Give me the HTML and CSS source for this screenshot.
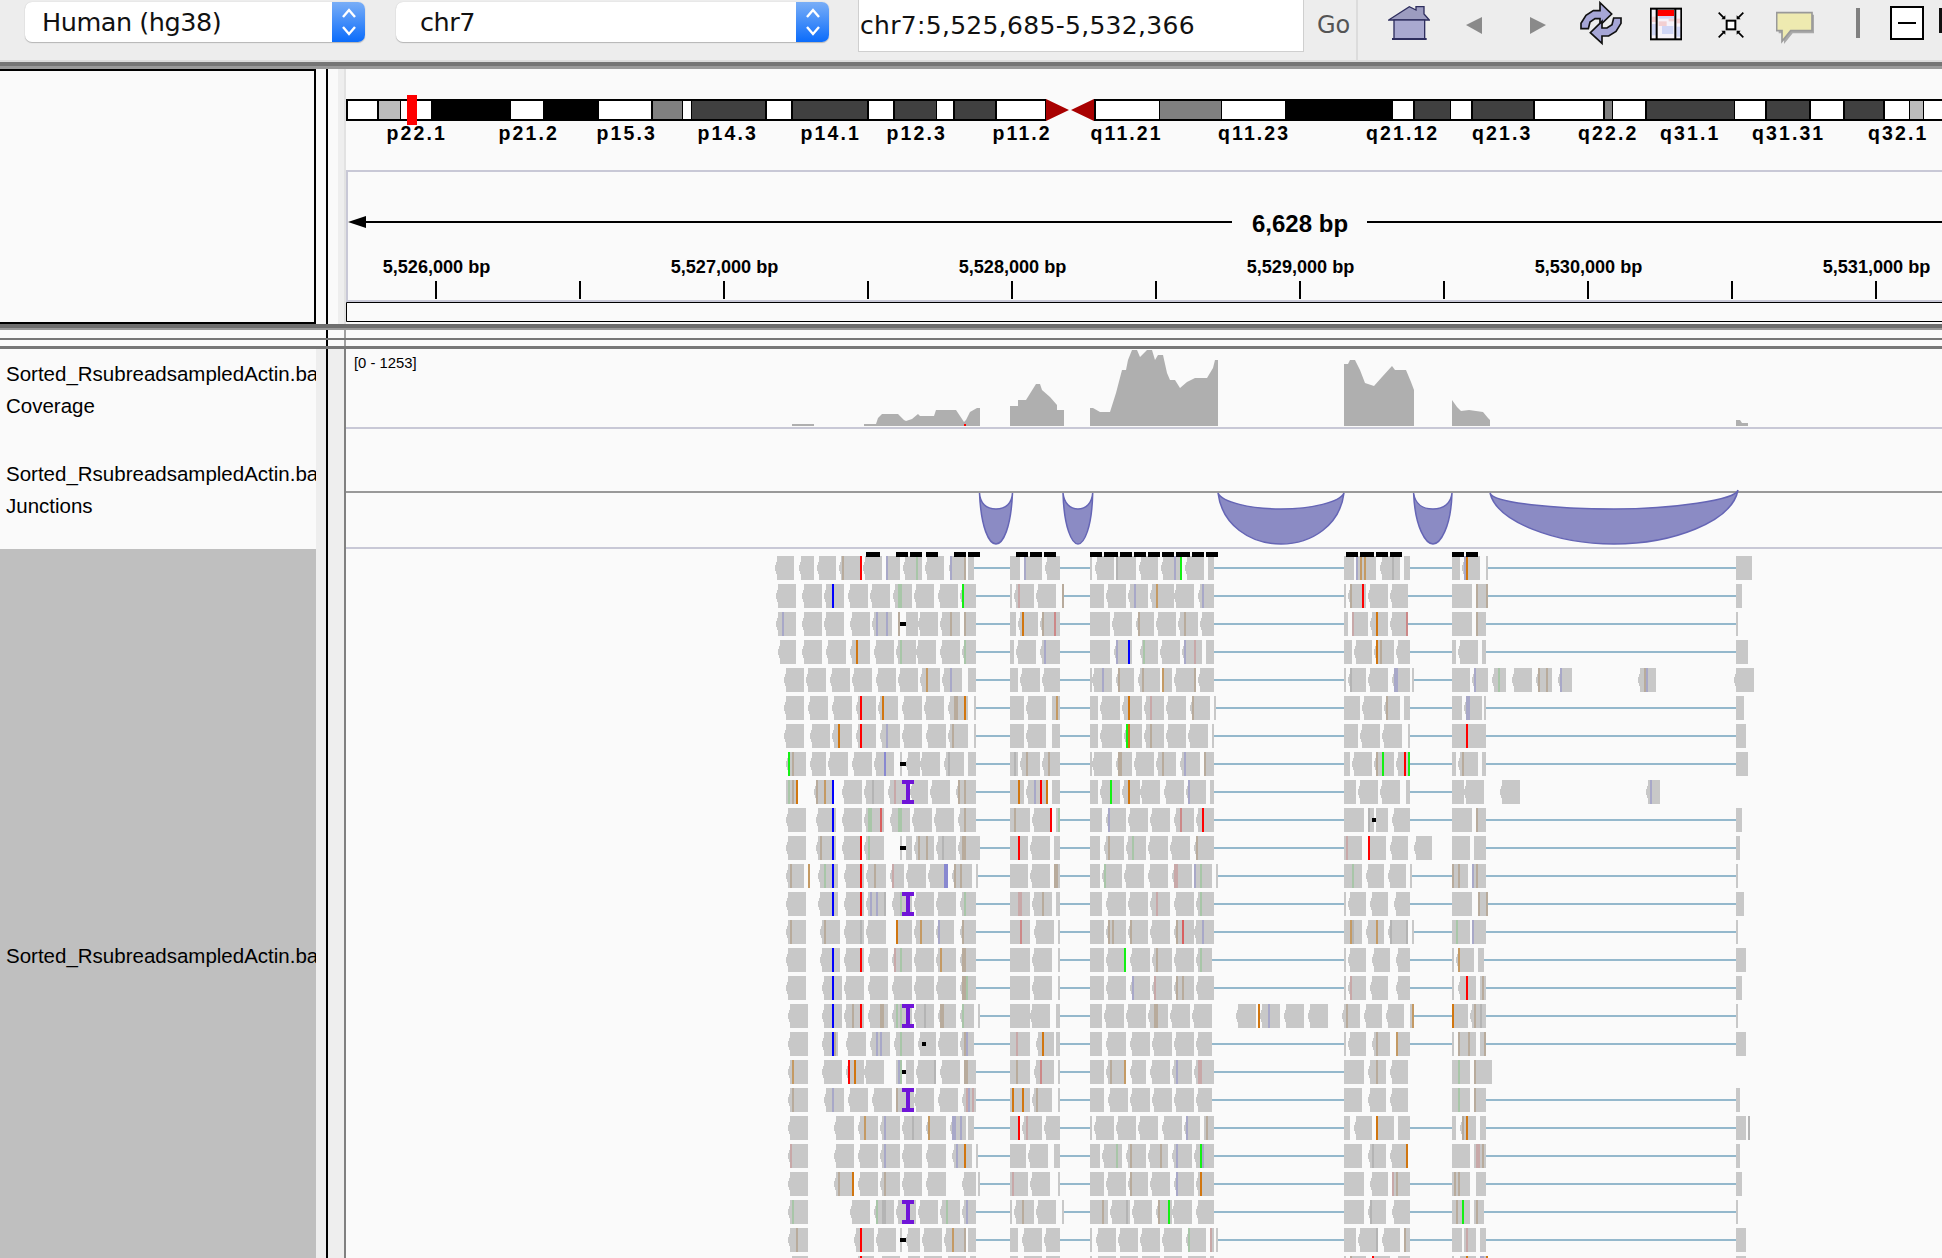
FILE: index.html
```html
<!DOCTYPE html>
<html lang="en">
<head>
<meta charset="utf-8">
<title>IGV</title>
<link rel="stylesheet" href="styles.css">
</head>
<body>
<div class="app">
  <header class="toolbar">
    <div class="combo combo-genome"><span class="combo-text">Human (hg38)</span>
      <span class="stepper"><svg class="chev" viewBox="0 0 16 30"><path d="M2 10 L8 3 L14 10 M2 20 L8 27 L14 20"/></svg></span></div>
    <div class="combo combo-chr"><span class="combo-text">chr7</span>
      <span class="stepper"><svg class="chev" viewBox="0 0 16 30"><path d="M2 10 L8 3 L14 10 M2 20 L8 27 L14 20"/></svg></span></div>
    <div class="locus">chr7:5,525,685-5,532,366</div>
    <div class="go">Go</div>
    <svg class="icon ic-home" viewBox="24 0 126 180"><path class="home-roof" d="M26 60 L88 20 L108 30 L108 20 L132 20 L132 42 L148 60 Z"/><rect class="home-body" x="42" y="60" width="92" height="56"/><path class="home-base" d="M36 117 H140"/></svg>
    <svg class="icon ic-left" viewBox="0 0 16 60"><path class="nav" d="M0 25 L16 17 V34 Z"/></svg>
    <svg class="icon ic-right" viewBox="0 0 16 60"><path class="nav" d="M16 25 L0 17 V34 Z"/></svg>
    <svg class="icon ic-refresh" viewBox="600 0 126 180"><path class="refresh" d="M603 86 V70 L618 46 L640 32 H660 V8 L695 42 L660 76 V56 H645 L630 66 L625 86 Z"/><path class="refresh" d="M723 54 V70 L708 94 L686 108 H666 V130 L631 98 L666 64 V84 H681 L696 74 L701 54 Z"/></svg>
    <svg class="icon ic-region" viewBox="810 0 96 180">
      <rect class="rg-bg" x="812" y="26" width="92" height="92"/>
      <rect class="rg-pink" x="816" y="50" width="12" height="16"/><rect class="rg-blue" x="816" y="72" width="12" height="34"/>
      <rect class="rg-pink" x="836" y="64" width="24" height="14"/><rect class="rg-blue" x="846" y="78" width="34" height="24"/><rect class="rg-blue" x="836" y="48" width="46" height="8"/><rect class="rg-pink" x="866" y="56" width="16" height="8"/><rect class="rg-blue" x="890" y="80" width="12" height="30"/><rect class="rg-pink" x="890" y="56" width="12" height="14"/>
      <rect class="rg-red" x="832" y="30" width="50" height="18"/>
      <path class="rg-line" d="M830 26 V118 M886 26 V118"/>
      <rect class="rg-frame" x="812" y="26" width="92" height="92"/>
    </svg>
    <svg class="icon ic-collapse" viewBox="1014 0 78 180">
      <rect class="cl-box" x="1040" y="62" width="26" height="26"/>
      <path class="cl-arrow" d="M1016 38 L1034 56 M1090 38 L1072 56 M1016 112 L1034 94 M1090 112 L1072 94"/>
      <path class="cl-head" d="M1036 58 H1024 L1036 46 Z M1070 58 H1082 L1070 46 Z M1036 92 H1024 L1036 104 Z M1070 92 H1082 L1070 104 Z"/>
    </svg>
    <svg class="icon ic-bubble" viewBox="1188 0 114 180"><path class="bb-shadow" d="M1196 44 H1302 V100 H1238 L1212 132 V100 H1196 Z"/><path class="bb-fill" d="M1190 38 H1296 V92 H1232 L1206 124 V92 H1190 Z"/></svg>
    <svg class="icon ic-sep" viewBox="0 0 4 60"><rect class="sep" x="0" y="8" width="4" height="30"/></svg>
    <svg class="icon ic-box" viewBox="0 0 34 60"><rect class="bx" x="1" y="7" width="32" height="32"/><path class="bx-line" d="M8 23 H26"/></svg>
    <svg class="icon ic-box2" viewBox="0 0 3 60"><rect class="sep-k" x="0" y="8" width="3" height="25"/></svg>
  </header>
  <div class="band-top"></div>

  <section class="cols head-row">
    <div class="name-box"></div>
    <div class="gut-a"></div><div class="divider"></div><div class="gut-b"></div>
    <svg class="head-svg" viewBox="344 69 1598 255">
      <rect class="strip" x="344" y="69" width="2" height="255"/>
      <rect class="k" x="346" y="99" width="700" height="22"/>
      <rect class="k" x="1094" y="99" width="848" height="22"/>
      <g class="w">
        <rect x="348" y="101" width="29" height="18"/><rect x="401" y="101" width="30" height="18"/><rect x="511" y="101" width="32" height="18"/><rect x="599" y="101" width="52" height="18"/><rect x="683" y="101" width="8" height="18"/><rect x="767" y="101" width="24" height="18"/><rect x="869" y="101" width="24" height="18"/><rect x="937" y="101" width="16" height="18"/><rect x="997" y="101" width="48" height="18"/><rect x="1096" y="101" width="63" height="18"/><rect x="1222" y="101" width="63" height="18"/><rect x="1393" y="101" width="20" height="18"/><rect x="1451" y="101" width="20" height="18"/><rect x="1535" y="101" width="68" height="18"/><rect x="1613" y="101" width="32" height="18"/><rect x="1735" y="101" width="30" height="18"/><rect x="1811" y="101" width="32" height="18"/><rect x="1885" y="101" width="24" height="18"/><rect x="1924" y="101" width="18" height="18"/>
      </g>
      <g class="g-lt"><rect x="379" y="101" width="21" height="18"/><rect x="1910" y="101" width="13" height="18"/></g>
      <g class="g-md"><rect x="653" y="101" width="29" height="18"/><rect x="1160" y="101" width="61" height="18"/><rect x="1605" y="101" width="7" height="18"/></g>
      <g class="g-dk"><rect x="692" y="101" width="73" height="18"/><rect x="793" y="101" width="74" height="18"/><rect x="895" y="101" width="41" height="18"/><rect x="955" y="101" width="40" height="18"/><rect x="1415" y="101" width="35" height="18"/><rect x="1473" y="101" width="60" height="18"/><rect x="1647" y="101" width="87" height="18"/><rect x="1767" y="101" width="42" height="18"/><rect x="1845" y="101" width="38" height="18"/></g>
      <path class="centro" d="M1046 99 L1069 110 L1046 121 Z M1094 99 L1071 110 L1094 121 Z"/>
      <rect class="marker" x="407" y="95" width="10" height="30"/>
      <g class="cyto-label">
        <text x="386.5" y="139.5">p22.1</text><text x="498.5" y="139.5">p21.2</text><text x="596.5" y="139.5">p15.3</text><text x="697.5" y="139.5">p14.3</text><text x="800.5" y="139.5">p14.1</text><text x="886.5" y="139.5">p12.3</text><text x="992.5" y="139.5">p11.2</text><text x="1090.5" y="139.5">q11.21</text><text x="1218" y="139.5">q11.23</text><text x="1366" y="139.5">q21.12</text><text x="1472" y="139.5">q21.3</text><text x="1578" y="139.5">q22.2</text><text x="1660" y="139.5">q31.1</text><text x="1752" y="139.5">q31.31</text><text x="1868" y="139.5">q32.1</text>
      </g>
      <path class="rule-frame" d="M1942 171 H347 V301 H1942"/>
      <path class="rule-black" d="M1942 302.5 H346.5 V321.5 H1942"/>
      <path class="span-line" d="M366 222 H1232 M1367 222 H1942"/>
      <path class="k" d="M348 222 L366 216 V228 Z"/>
      <text class="span-text" x="1252" y="232">6,628 bp</text>
      <path class="ticks" d="M436 281 V299 M580 281 V299 M724 281 V299 M868 281 V299 M1012 281 V299 M1156 281 V299 M1300 281 V299 M1444 281 V299 M1588 281 V299 M1732 281 V299 M1876 281 V299"/>
      <g class="tick-label">
        <text x="436.5" y="273">5,526,000 bp</text><text x="724.5" y="273">5,527,000 bp</text><text x="1012.5" y="273">5,528,000 bp</text><text x="1300.5" y="273">5,529,000 bp</text><text x="1588.5" y="273">5,530,000 bp</text><text x="1876.5" y="273">5,531,000 bp</text>
      </g>
    </svg>
  </section>

  <div class="band-a"></div>
  <div class="cols gap-row gap-8"><div></div><div></div><div class="divider"></div><div></div><div class="strip-cell"></div></div>
  <div class="band-b"></div>
  <div class="cols gap-row gap-6"><div></div><div></div><div class="divider"></div><div></div><div class="strip-cell"></div></div>
  <div class="band-c"></div>

  <section class="cols track-row track-cov">
    <div class="name cov-name"><div class="line">Sorted_RsubreadsampledActin.bam</div><div class="line">Coverage</div></div>
    <div class="gut"></div><div class="divider"></div><div class="gut"></div>
    <svg class="track-svg" viewBox="344 349 1598 80">
      <rect class="strip-g" x="344" y="349" width="2" height="80"/>
      <text class="range" x="354" y="368">[0 - 1253]</text>
      <g class="cov">
        <path d="M792 426 V424 H814 V426 Z"/>
        <path d="M864 426 V424 H876 L878 418 L882 414 H898 L904 420 L906 421 L912 419 L918 414 L920 416 H934 L936 410 H956 L964 422 L966 420 L970 412 L977 408 H980 V426 Z"/>
        <path d="M1010 426 V406 H1018 V400 H1026 L1036 384 H1040 L1042 390 L1050 397 L1057 405 V410 H1064 V426 Z"/>
        <path d="M1090 426 V408 H1093 L1100 412 H1110 L1116 393 L1122 370 H1126 L1128 360 L1132 350 H1137 L1140 357 L1147 350 H1152 L1155 360 L1158 355 H1163 L1167 373 L1170 380 H1175 L1180 388 L1187 382 L1195 378 H1207 L1213 368 L1215 360 H1218 V426 Z"/>
        <path d="M1344 426 V364 H1348 L1350 360 H1355 L1360 370 L1365 383 L1374 386 L1382 377 L1392 366 L1395 370 H1406 L1411 382 L1414 390 V426 Z"/>
        <path d="M1452 426 V400 L1457 407 L1461 411 L1469 410 L1483 412 L1488 418 L1490 420 V426 Z"/>
        <path d="M1736 426 V420 H1740 L1742 423 H1748 V426 Z"/>
      </g>
      <rect class="cov-red" x="964" y="424" width="2" height="2"/>
      <rect class="sep-lt" x="346" y="427" width="1596" height="2"/>
    </svg>
  </section>

  <section class="cols track-row track-junc">
    <div class="name junc-name"><div class="line">Sorted_RsubreadsampledActin.bam</div><div class="line">Junctions</div></div>
    <div class="gut"></div><div class="divider"></div><div class="gut"></div>
    <svg class="track-svg" viewBox="344 429 1598 120">
      <rect class="strip-g" x="344" y="429" width="2" height="120"/>
      <rect class="sep-md" x="346" y="491" width="1596" height="2"/>
      <g class="arc">
        <path d="M979.5 493 C981 528 989 544 996 544 C1003 544 1011 528 1012.5 493 C1012 503 1006 509 996 509 C986 509 980 503 979.5 493 Z"/>
        <path d="M1063 493 C1064 528 1072 544 1078 544 C1084 544 1092 528 1092.7 493 C1092 503 1086 509 1078 509 C1070 509 1064 503 1063 493 Z"/>
        <path d="M1218 493 C1222 525 1250 544 1281 544 C1312 544 1340 525 1344 493 C1340 502 1312 509 1281 509 C1250 509 1222 502 1218 493 Z"/>
        <path d="M1413.6 493 C1415 528 1426 544 1433 544 C1440 544 1451 528 1452 493 C1451 503 1444 509 1433 509 C1422 509 1415 503 1413.6 493 Z"/>
        <path d="M1490 493 C1497 522 1556 544 1614 544 C1672 544 1732 522 1738 490 C1736 500 1672 509 1614 509 C1556 509 1493 503 1490 493 Z"/>
      </g>
      <rect class="sep-lt" x="346" y="547" width="1596" height="2"/>
    </svg>
  </section>

  <section class="cols track-row track-reads">
    <div class="name reads-name"><div class="line">Sorted_RsubreadsampledActin.bam</div></div>
    <div class="gut"></div><div class="divider"></div><div class="gut"></div>
    <svg id="reads" class="track-svg" viewBox="344 549 1598 709"><rect class="strip-g" x="344" y="549" width="2" height="709"/></svg>
  </section>
</div>
<script src="reads.js"></script>
</body>
</html>
```
FILE: styles.css
```css
* { box-sizing: border-box; }
html, body { margin: 0; padding: 0; background: #fafafa; }
.app { width: 1942px; height: 1258px; overflow: hidden; display: flex; flex-direction: column; font-family: "Liberation Sans", Arial, sans-serif; }

.toolbar { flex: none; height: 62px; background: #ededed; border-bottom: 2px solid #dcdcdc; display: flex; align-items: flex-start; }
.combo { flex: none; height: 40px; margin-top: 2px; background: #fff; border-radius: 7px; box-shadow: 0 1px 1px #b5b5b5, 0 0 1px #c4c4c4; display: flex; justify-content: space-between; align-items: center; overflow: hidden; font-family: "DejaVu Sans", sans-serif; font-size: 25.5px; letter-spacing: -0.45px; color: #111; }
.combo-genome { margin-left: 25px; width: 340px; }
.combo-chr { margin-left: 31px; width: 433px; }
.combo-text { padding-left: 17px; line-height: 42px; }
.combo-chr .combo-text { padding-left: 24px; }
.stepper { width: 33px; height: 40px; background: linear-gradient(#79aef7, #0b6cfb); display: flex; align-items: center; justify-content: center; }
.chev { width: 16px; height: 30px; fill: none; stroke: #fff; stroke-width: 2.4; }
.locus { flex: none; width: 446px; height: 52px; margin-left: 29px; padding-left: 1px; background: #fff; border: 1px solid #cfcfcf; border-top: 0; font-family: "DejaVu Sans", sans-serif; font-size: 25px; letter-spacing: 0.3px; line-height: 51px; color: #111; }
.go { flex: none; width: 54px; height: 60px; padding-left: 13px; border-right: 2px solid #dcdcdc; font-family: "DejaVu Sans", sans-serif; font-size: 24px; line-height: 50px; color: #555; }

.icon { flex: none; height: 60px; }
.ic-home { width: 42px; margin-left: 30px; }
.ic-left { width: 16px; margin-left: 36px; }
.ic-right { width: 16px; margin-left: 48px; }
.ic-refresh { width: 42px; margin-left: 34px; }
.ic-region { width: 32px; margin-left: 28px; }
.ic-collapse { width: 26px; margin-left: 36px; }
.ic-bubble { width: 38px; margin-left: 32px; }
.ic-sep { width: 4px; margin-left: 42px; }
.ic-box { width: 34px; margin-left: 30px; }
.ic-box2 { width: 3px; margin-left: 15px; }
.home-roof { fill: #9c9cc0; stroke: #2e2e5e; stroke-width: 4; }
.home-body { fill: #a9a9d0; stroke: #2e2e5e; stroke-width: 4; }
.home-base { stroke: #2e2e5e; stroke-width: 6; fill: none; }
.nav { fill: #8a8a8a; }
.refresh { fill: #a6a6d6; stroke: #111; stroke-width: 5; }
.rg-bg { fill: #f6f2fa; }
.rg-pink { fill: #f3cfd2; }
.rg-blue { fill: #d0d6f6; }
.rg-red { fill: #ff0000; }
.rg-line { stroke: #000; stroke-width: 6; fill: none; }
.rg-frame { fill: none; stroke: #000; stroke-width: 6; }
.cl-box { fill: #fff; stroke: #000; stroke-width: 6; }
.cl-arrow { stroke: #000; stroke-width: 5; fill: none; }
.cl-head { fill: #000; }
.bb-shadow { fill: #aaa; }
.bb-fill { fill: #eeeab0; stroke: #999; stroke-width: 5; }
.sep { fill: #808080; }
.sep-k { fill: #111; }
.bx { fill: #fff; stroke: #000; stroke-width: 2; }
.bx-line { stroke: #000; stroke-width: 2; fill: none; }

.band-top { flex: none; height: 7px; background: linear-gradient(#757575 0 4px, #9a9a9a 4px 7px); }
.cols { flex: none; display: grid; grid-template-columns: 316px 10px 2px 16px 1598px; }
.head-row { height: 255px; }
.name-box { border: 2px solid #000; border-left: 0; background: #fafafa; }
.gut-a { background: #fafafa; }
.gut-b { background: linear-gradient(90deg, #fafafa 0 10px, #eeeeee 10px 16px); }
.divider { background: #000; }
.head-svg, .track-svg { display: block; width: 1598px; height: 100%; background: #fafafa; }
.strip { fill: #e2e2e2; }
.k { fill: #000; }
.w { fill: #fff; }
.g-lt { fill: #bbbbbb; }
.g-md { fill: #808080; }
.g-dk { fill: #404040; }
.centro { fill: #a80000; }
.marker { fill: #ff0000; }
.cyto-label { font-size: 19.5px; font-weight: 700; letter-spacing: 2.1px; fill: #000; }
.rule-frame { fill: none; stroke: #c8c8d6; stroke-width: 2; }
.rule-black { fill: none; stroke: #000; stroke-width: 1; }
.span-line { fill: none; stroke: #000; stroke-width: 2; }
.span-text { font-size: 24px; font-weight: 700; fill: #000; }
.ticks { fill: none; stroke: #000; stroke-width: 2; }
.tick-label { font-size: 18.1px; font-weight: 700; fill: #000; text-anchor: middle; }

.band-a { flex: none; height: 6px; background: linear-gradient(#6e6e6e 0 4px, #999 4px 6px); }
.band-b { flex: none; height: 2px; background: #777; }
.band-c { flex: none; height: 3px; background: #777; }
.gap-8 { height: 8px; }
.gap-6 { height: 6px; }
.gap-row { background: #fafafa; }
.strip-cell { border-left: 2px solid #a0a0a0; }

.track-cov { height: 80px; }
.track-junc { height: 120px; }
.track-reads { height: 709px; }
.name { background: #fafafa; overflow: hidden; font-size: 20.5px; line-height: 32px; color: #000; white-space: nowrap; padding-left: 6px; }
.cov-name { padding-top: 9px; }
.junc-name { padding-top: 29px; }
.reads-name { padding-top: 391px; background: #bfbfbf; }
.line { height: 32px; }
.gut { background: #eeeeee; }
.strip-g { fill: #808080; }
.range { font-size: 14.8px; fill: #000; }
.cov { fill: #afafaf; }
.cov-red { fill: #ff0000; }
.sep-lt { fill: #c8c8d6; }
.sep-md { fill: #999; }
.arc { fill: #8b8bc4; stroke: #6565b5; stroke-width: 1.5; }

.read { fill: #c8c8c8; }
.intron { fill: #94b8cc; }
.tag { fill: #000; }
.ins { fill: #7015d8; }
```
FILE: reads.js
```js
(function () {
  var NS = "http://www.w3.org/2000/svg";
  var svg = document.getElementById("reads");
  var COLORS = { r: "#ff0000", R: "#d86060", b: "#0000ff", g: "#14f014", o: "#d17610", a: "#c49a64", t: "#b8ab9c", p: "#a8a8c8", P: "#8888d0", k: "#c8a8a8", K: "#cc8888", e: "#a8c6a8", y: "#b4b4b4", D: "#000000" };
  var FLAT = [1010, 1090, 1344, 1452, 1736];
  var BOUND = [1000, 1075, 1280, 1430, 1600];

  var left = [
    "45-102 117-162 171-228 237-306 t246 r300 309-366 378-420 p378 429-486 e468 495-552 567-618 p570 t612 624-642 750-780 792-846 p792 855-900 990-996 1005-1062 1068-1128 y1068 1137-1194 1203-1266 p1242 g1260 1275-1332 1344-1362",
    "48-108 126-186 192-252 b216 264-324 330-390 399-456 e414-426 462-522 534-594 600-648 g606 750-756 762-822 k774 828-888 906-912 t906 990-1032 1038-1098 1104-1164 p1122 1170-1242 a1188 1242-1302 1314-1362 p1326",
    "48-108 p66 126-186 192-252 270-330 336-396 p348 p378 414-420 t414 438-474 474-534 540-600 t570 612-648 t612 D420-438 750-768 774-834 o786 840-900 t846 K882 990-1050 1056-1116 1128-1182 t1134 1188-1248 1254-1314 t1272 1320-1362",
    "54-108 126-186 198-258 270-330 o288 342-402 408-468 e420 468-528 540-600 606-648 e612 750-762 768-828 840-900 p852 990-1050 1062-1116 p1068 b1104 1140-1194 e1150 1200-1260 1266-1326 p1272 k1302 1338-1362",
    "42-102 108-168 180-240 246-306 318-378 384-444 450-510 a468 516-576 p540 594-618 720-744 750-810 816-870 960-966 966-1026 p996 1038-1092 t1044 1104-1170 t1116 1176-1206 a1176 1212-1278 t1272 1284-1332",
    "42-102 114-174 186-246 258-318 r270 324-384 o336 396-456 462-522 534-594 t552-564 o582 612-618 720-762 768-828 846-870 a858 960-984 990-1050 1056-1116 o1074 1122-1182 k1140 1188-1248 1260-1320 t1266 1332-1338",
    "42-102 120-180 186-246 o204 258-318 r270 330-390 p348 396-456 468-528 534-594 t546 612-618 720-762 768-828 846-870 960-984 990-1056 1062-1116 g1068 o1074 1122-1182 t1140 1188-1248 1254-1314 1326-1332",
    "48-108 g54 t66 120-168 174-234 246-306 312-372 P342 390-396 408-450 450-510 522-582 y534 594-618 D390-408 720-744 y732 750-810 t768 816-870 t834 960-966 966-1026 1038-1086 t1044-1056 1092-1152 1158-1218 t1176 1230-1290 p1242 1302-1332 t1302",
    "48-84 e54 t66 o78 132-192 t138 a162 b186 216-276 282-342 y306 354-414 k372 420-474 480-540 558-618 t564 t582 I396 720-762 o744 768-828 p792 r810 828-834 o828 846-870 960-984 990-1050 g1020 1056-1110 o1074 1110-1170 1182-1242 1248-1308 p1254 1320-1332",
    "48-108 138-198 b186 216-276 282-342 e294-306 R330 360-420 e384-396 426-486 492-552 564-618 t582 720-780 t732 786-846 r840 858-870 e864 960-996 1008-1068 p1014 1074-1134 1140-1200 1212-1272 K1230 1278-1332 r1296",
    "48-108 138-198 t150 b186 216-276 r270 282-342 e294 390-396 408-426 432-492 t444 t468 498-558 y516 564-624 t576-588 624-630 D390-408 720-774 r744 780-840 852-870 960-990 1002-1062 t1014 1068-1128 e1086 1134-1194 1200-1260 1272-1332 t1278",
    "48-102 t60 114-120 a114 144-204 e162 b186 222-282 r270 288-348 t312 360-402 k366 408-468 474-534 P522-534 546-606 t552 t570 618-624 720-774 780-840 852-870 t852-864 960-990 996-1056 e1002 1062-1122 1134-1194 1206-1266 k1212-1224 1272-1326 p1272 e1290 1338-1344",
    "48-108 144-204 b186 222-282 r270 288-348 p300 p318 y342 366-426 e390 432-492 498-558 570-618 e582 I396 720-780 k744-756 786-846 t816 858-870 960-996 1008-1068 1074-1134 1140-1200 k1158 1212-1272 1278-1332 e1290",
    "48-108 t60 150-210 t162 222-282 y270 288-348 378-426 o378 432-492 a450 498-552 p504 570-618 t576 720-780 K750 792-852 864-870 960-1002 1008-1068 t1014 t1026 1074-1134 t1080 1140-1200 1212-1272 t1218 R1236 1272-1332 p1296",
    "48-108 150-210 b186 222-282 r270 294-354 366-426 k372 e390 432-492 498-558 a510 570-618 t576-588 720-780 786-846 864-870 960-1002 1008-1068 g1062 1080-1140 1146-1206 t1158 1212-1272 1278-1326 e1290",
    "48-108 156-216 b186 222-282 294-354 366-426 432-492 498-558 570-618 t576-588 e588 720-780 786-846 864-870 960-1002 1008-1068 1080-1140 p1086 1146-1206 k1152 1212-1272 t1218 t1236 1278-1332",
    "54-114 156-216 b186 222-282 t246 r270 294-354 t330-342 366-426 e378 e390 432-492 y462 504-558 t510-522 570-612 e576 624-630 I396 720-780 780-840 858-870 960-996 1002-1062 1068-1128 1134-1194 t1152-1164 1200-1260 1266-1326 1398-1458 o1464 1470-1530 p1494 1542-1602 1614-1674",
    "54-114 156-204 b186 t192 228-288 300-360 p318 p330 372-432 e390 444-498 504-564 570-612 t582 p588 D456-468 720-780 k738 798-852 o816 858-870 960-996 1008-1068 1080-1140 1146-1206 1212-1272 1278-1326",
    "54-114 a66 156-216 228-282 r234 o252 282-342 378-396 p384 e390 408-432 438-498 y492 510-570 582-618 t582-594 D396-408 720-780 t738 792-852 K810 864-870 960-1002 1008-1068 t1020 a1062 1080-1128 1140-1200 1206-1266 p1218 1272-1332 k1284-1296",
    "54-114 t66 162-222 p186 234-294 306-366 378-432 t378 432-492 504-564 576-618 k588 p594 k606 I396 720-780 o726 o756 786-846 t798 864-870 960-1002 1014-1074 1080-1140 1146-1206 1212-1272 1278-1326",
    "54-114 192-252 264-324 a282 330-390 p342 396-456 y426 468-528 a474 540-588 p546-558 p570 594-612 720-750 r744 756-816 k768 822-870 960-966 972-1032 1038-1098 1104-1164 1176-1236 1242-1290 p1248 1302-1332 t1308",
    "54-114 k60 192-252 264-324 330-390 p342 396-456 468-528 546-606 p558 o582 618-624 720-768 774-834 852-870 960-990 996-1056 e1038 1068-1128 t1080 1134-1194 t1170 1206-1266 p1218 1272-1332 g1290 p1296",
    "54-114 192-252 t204 o246 264-324 330-390 t342 396-456 468-528 576-618 624-630 720-774 k726 780-840 864-870 960-1002 1008-1068 1074-1134 t1080 1140-1200 1212-1272 p1218 1278-1332 o1290",
    "54-114 e66 240-300 312-372 e318 y336-348 378-438 444-504 510-570 e528 576-618 p588 I396 720-726 732-792 t756 798-858 876-882 960-1014 t996 1020-1080 y1068 1086-1146 1158-1206 t1164 g1194 1206-1266 1278-1332",
    "54-114 t78 252-312 r270 318-378 390-396 408-450 456-516 522-582 a546 582-588 t582 594-618 D390-408 720-744 756-816 822-870 960-966 978-1038 1044-1104 1110-1170 1176-1236 1248-1308 e1254 1320-1332 k1320 1338-1344",
    "60-114 258-312 r270 330-390 408-450 456-516 528-588 600-618 720-744 756-816 822-870 960-966 978-1038 1044-1104 1110-1170 1176-1236 1248-1308 1320-1332"
  ];

  var right = [
    "12-42 48-108 p48 a60 a72 120-180 y156 192-210 336-360 366-420 p372 o378 438-444 1188-1236",
    "12-18 24-78 t30 r66 84-144 150-204 336-396 408-438 t408 438-444 t438 1188-1206",
    "12-24 36-84 k36 90-144 o108 150-204 K198 336-396 408-438 t408 1188-1194",
    "12-36 42-96 102-162 o108 t120 168-210 336-348 354-414 426-438 1188-1224",
    "12-18 24-78 y30 84-144 156-210 p162-174 216-222 336-390 396-444 p402 N 456-498 e474 516-576 588-636 t594 t618 654-696 p660 894-948 t912 p918 1182-1242",
    "12-60 66-126 132-180 t138 192-210 336-366 372-426 p378-390 432-438 1188-1212",
    "12-54 60-120 126-186 204-210 336-378 378-438 r378 1188-1218",
    "12-30 36-96 102-162 t108 g126 168-210 r192 g204 336-348 354-414 t366 426-438 1188-1224",
    "12-48 54-114 120-180 198-210 336-372 372-432 N 480-540 918-960 p930",
    "12-72 84-102 y84 108-144 156-210 D96-108 336-396 408-438 t408 1188-1206",
    "12-66 k18 84-138 r84 150-204 222-276 n 336-390 402-438 1188-1200",
    "12-66 e36 78-132 144-198 210-216 336-384 t336 t354 396-438 p396 t408 1188-1194",
    "12-18 24-78 90-144 162-210 336-396 414-438 t414 438-444 t438 1188-1212",
    "12-66 a30 y36 78-132 a108 144-204 y150 y198 216-222 336-390 e348 396-438 p396 1188-1194",
    "12-18 24-78 96-150 168-210 336-342 348-402 a354 414-432 1188-1218",
    "12-18 24-78 k30 90-144 168-210 336-342 354-408 r378 420-438 t426 1188-1206",
    "6-60 t18 72-126 138-192 210-222 a216 336-384 o336 390-438 t402 y420 1188-1194",
    "12-18 24-78 96-150 t108 168-210 a168 336-342 354-408 t354 t384 420-438 t432 1188-1218",
    "12-72 84-138 t108 150-204 n 336-390 e354 402-456 t402",
    "12-66 84-138 150-204 n 336-390 e354 402-438 t402 1188-1200",
    "12-30 42-96 108-162 o108 174-210 336-348 360-408 t366 o378 420-438 1188-1218 1224-1230 y1224",
    "12-66 84-138 y96 150-204 o198 n 336-390 402-438 k408-420 t426 1188-1200",
    "12-72 90-144 156-210 k156 t168 336-390 t342 t354 408-438 1188-1206",
    "12-72 84-138 y90 156-210 336-390 t348 g366 402-432 t408 1188-1194",
    "12-48 54-114 y108 126-180 192-210 t192 336-366 372-408 k378 420-438 1188-1218",
    "12-18 24-78 t30 96-150 r96 168-210 336-342 354-408 o378 420-444 p420-432 o438 1188-1218"
  ];

  var topLeft = ["318-360", "408-444", "450-486", "498-534", "582-618", "624-660", "768-804", "810-846", "852-888", "990-1026", "1032-1074", "1080-1116", "1122-1158", "1164-1200", "1206-1242", "1248-1290", "1296-1332", "1338-1374"];
  var topRight = ["18-54", "60-102", "108-144", "150-186", "336-372", "378-414"];

  function el(name, attrs) {
    var n = document.createElementNS(NS, name);
    for (var k in attrs) n.setAttribute(k, attrs[k]);
    svg.appendChild(n);
    return n;
  }
  function rect(x, y, w, h, cls, fill) {
    var a = { x: x, y: y, width: w, height: h, "shape-rendering": "crispEdges" };
    if (cls) a["class"] = cls;
    if (fill) a.fill = fill;
    return el("rect", a);
  }

  function parse(str, base, row) {
    str.split(" ").forEach(function (t) {
      if (t === "n" || t === "N") { row.blocks.push({ stop: t }); return; }
      var m = /^([A-Za-z]?)(\d+)(?:-(\d+))?$/.exec(t);
      var a = base + (+m[2]) / 3;
      var b = m[3] ? base + (+m[3]) / 3 : a + 2;
      if (!m[1]) row.blocks.push({ a: a, b: b });
      else if (m[1] === "I") row.ins.push(a);
      else if (m[1] === "D") row.tags.push({ a: a, b: b });
      else row.marks.push({ a: a, b: b, c: COLORS[m[1]] });
    });
  }

  left.forEach(function (str, i) {
    var y = 556 + 28 * i;
    var row = { blocks: [], marks: [], ins: [], tags: [] };
    parse(str, i < 4 ? 760 : 770, row);
    parse(right[i], 1340, row);

    var prev = null, skip = false, off = false;
    row.blocks.forEach(function (bk) {
      if (bk.stop) { skip = true; off = off || bk.stop === "N"; return; }
      if (prev && !skip && !off && bk.a - prev > 4 && BOUND.some(function (x) { return prev < x && bk.a > x; })) {
        rect(prev, y + 11, bk.a - prev, 2, "intron");
      }
      prev = Math.max(prev || 0, bk.b);
      skip = false;
    });

    row.blocks.forEach(function (bk) {
      if (bk.stop) return;
      var w = bk.b - bk.a;
      var flat = w < 14 || FLAT.indexOf(Math.round(bk.a)) >= 0;
      if (flat) { rect(bk.a, y, w, 24, "read"); return; }
      var m = y + 12, x0 = bk.a;
      var pts = [[x0 + 2, y], [bk.b, y], [bk.b, y + 24], [x0 + 2, y + 24], [x0 + 2, m + 6], [x0 + 1, m + 6], [x0 + 1, m + 3], [x0, m + 3], [x0, m - 3], [x0 + 1, m - 3], [x0 + 1, m - 6], [x0 + 2, m - 6]];
      el("polygon", { "class": "read", points: pts.map(function (p) { return p.join(","); }).join(" "), "shape-rendering": "crispEdges" });
    });

    row.marks.forEach(function (k) { rect(k.a, y, k.b - k.a, 24, null, k.c); });
    row.tags.forEach(function (k) { rect(k.a, y + 10, k.b - k.a, 4, "tag"); });
    row.ins.forEach(function (x) {
      rect(x, y, 12, 4, "ins");
      rect(x + 4, y, 4, 24, "ins");
      rect(x, y + 20, 12, 4, "ins");
    });
  });

  topLeft.forEach(function (t) {
    var p = t.split("-");
    rect(760 + p[0] / 3, 552, (p[1] - p[0]) / 3, 5, "tag");
  });
  topRight.forEach(function (t) {
    var p = t.split("-");
    rect(1340 + p[0] / 3, 552, (p[1] - p[0]) / 3, 5, "tag");
  });
})();
```
